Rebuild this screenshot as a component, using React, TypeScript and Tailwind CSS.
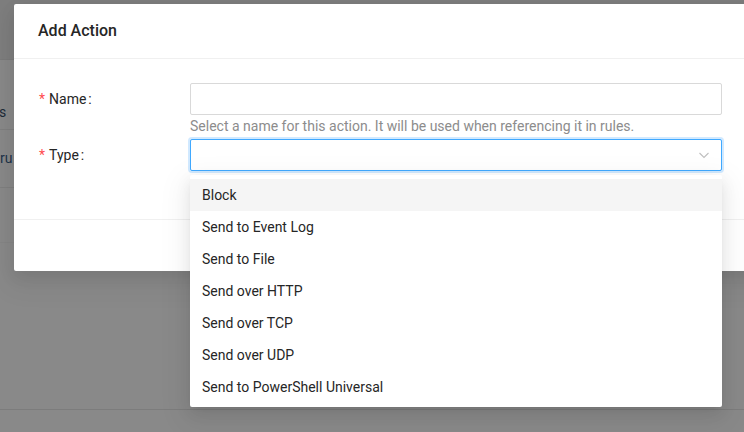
import React from "react";

const items = [
  "Block",
  "Send to Event Log",
  "Send to File",
  "Send over HTTP",
  "Send over TCP",
  "Send over UDP",
  "Send to PowerShell Universal",
];

export default function App() {
  const font = { fontFamily: "Roboto, 'Noto Sans', sans-serif" };
  return (
    <div
      className="relative w-[744px] h-[432px] overflow-hidden bg-[#898989] text-[14px]"
      style={font}
    >
      {/* background page (under mask) */}
      <div className="flex flex-col">
        <div className="h-[60px] bg-[#7e7e7e] border-b border-[#7a7a7a]" />
        <div className="h-[70px] border-b border-[#7f7f7f] flex items-start pt-[42px]">
          <span className="text-[#1d2b38] -ml-[1px] leading-[20px]">s</span>
        </div>
        <div className="h-[58px] border-b border-[#7f7f7f] flex items-center">
          <span className="text-[#1d3349]">ru</span>
        </div>
        <div className="h-[55px] border-b border-[#858585]" />
        <div className="h-[167px] border-b border-[#7c7c7c]" />
      </div>

      {/* modal */}
      <div className="absolute left-[14px] top-[4px] w-[760px] h-[267px] bg-white rounded-[2px] shadow-[0_6px_16px_rgba(0,0,0,0.08),0_9px_28px_8px_rgba(0,0,0,0.05)] flex flex-col">
        <div className="h-[55px] border-b border-[#f0f0f0] px-[24px] flex items-center">
          <span className="text-[16px] font-medium text-[#262626]">Add Action</span>
        </div>
        <div className="p-[24px] flex flex-col w-[732px]">
          <div className="flex">
            <div className="w-[152px] h-[32px] flex items-center text-[#262626]">
              <span className="text-[#ff4d4f] mr-[4px] ml-[1px]">*</span>
              <span>Name</span>
              <span className="ml-[2px]">:</span>
            </div>
            <div className="flex-1 flex flex-col">
              <div className="h-[32px] border border-[#d9d9d9] rounded-[2px] bg-white" />
              <div className="h-[24px] text-[#8c8c8c] leading-[22px]">
                Select a name for this action. It will be used when referencing it in rules.
              </div>
            </div>
          </div>
          <div className="flex">
            <div className="w-[152px] h-[32px] flex items-center text-[#262626]">
              <span className="text-[#ff4d4f] mr-[4px] ml-[1px]">*</span>
              <span>Type</span>
              <span className="ml-[2px]">:</span>
            </div>
            <div className="flex-1 h-[32px] border border-[#40a9ff] rounded-[2px] bg-white shadow-[0_0_0_2px_rgba(24,144,255,0.2)] flex items-center justify-end pr-[11px]">
              <svg width="12" height="12" viewBox="0 0 12 12" fill="none">
                <path d="M1.5 4 L6 8.5 L10.5 4" stroke="#bfbfbf" strokeWidth="1.1" />
              </svg>
            </div>
          </div>
          <div className="h-[24px]" />
        </div>
        <div className="border-t border-[#f0f0f0] flex-1" />
      </div>

      {/* dropdown */}
      <div className="absolute left-[190px] top-[175px] w-[532px] bg-white rounded-[2px] py-[4px] shadow-[0_3px_6px_-4px_rgba(0,0,0,0.12),0_6px_16px_rgba(0,0,0,0.08),0_9px_28px_8px_rgba(0,0,0,0.05)]">
        {items.map((t, i) => (
          <div
            key={t}
            className={
              "h-[32px] px-[12px] flex items-center text-[#262626] " +
              (i === 0 ? "bg-[#f5f5f5]" : "")
            }
          >
            {t}
          </div>
        ))}
      </div>
    </div>
  );
}
